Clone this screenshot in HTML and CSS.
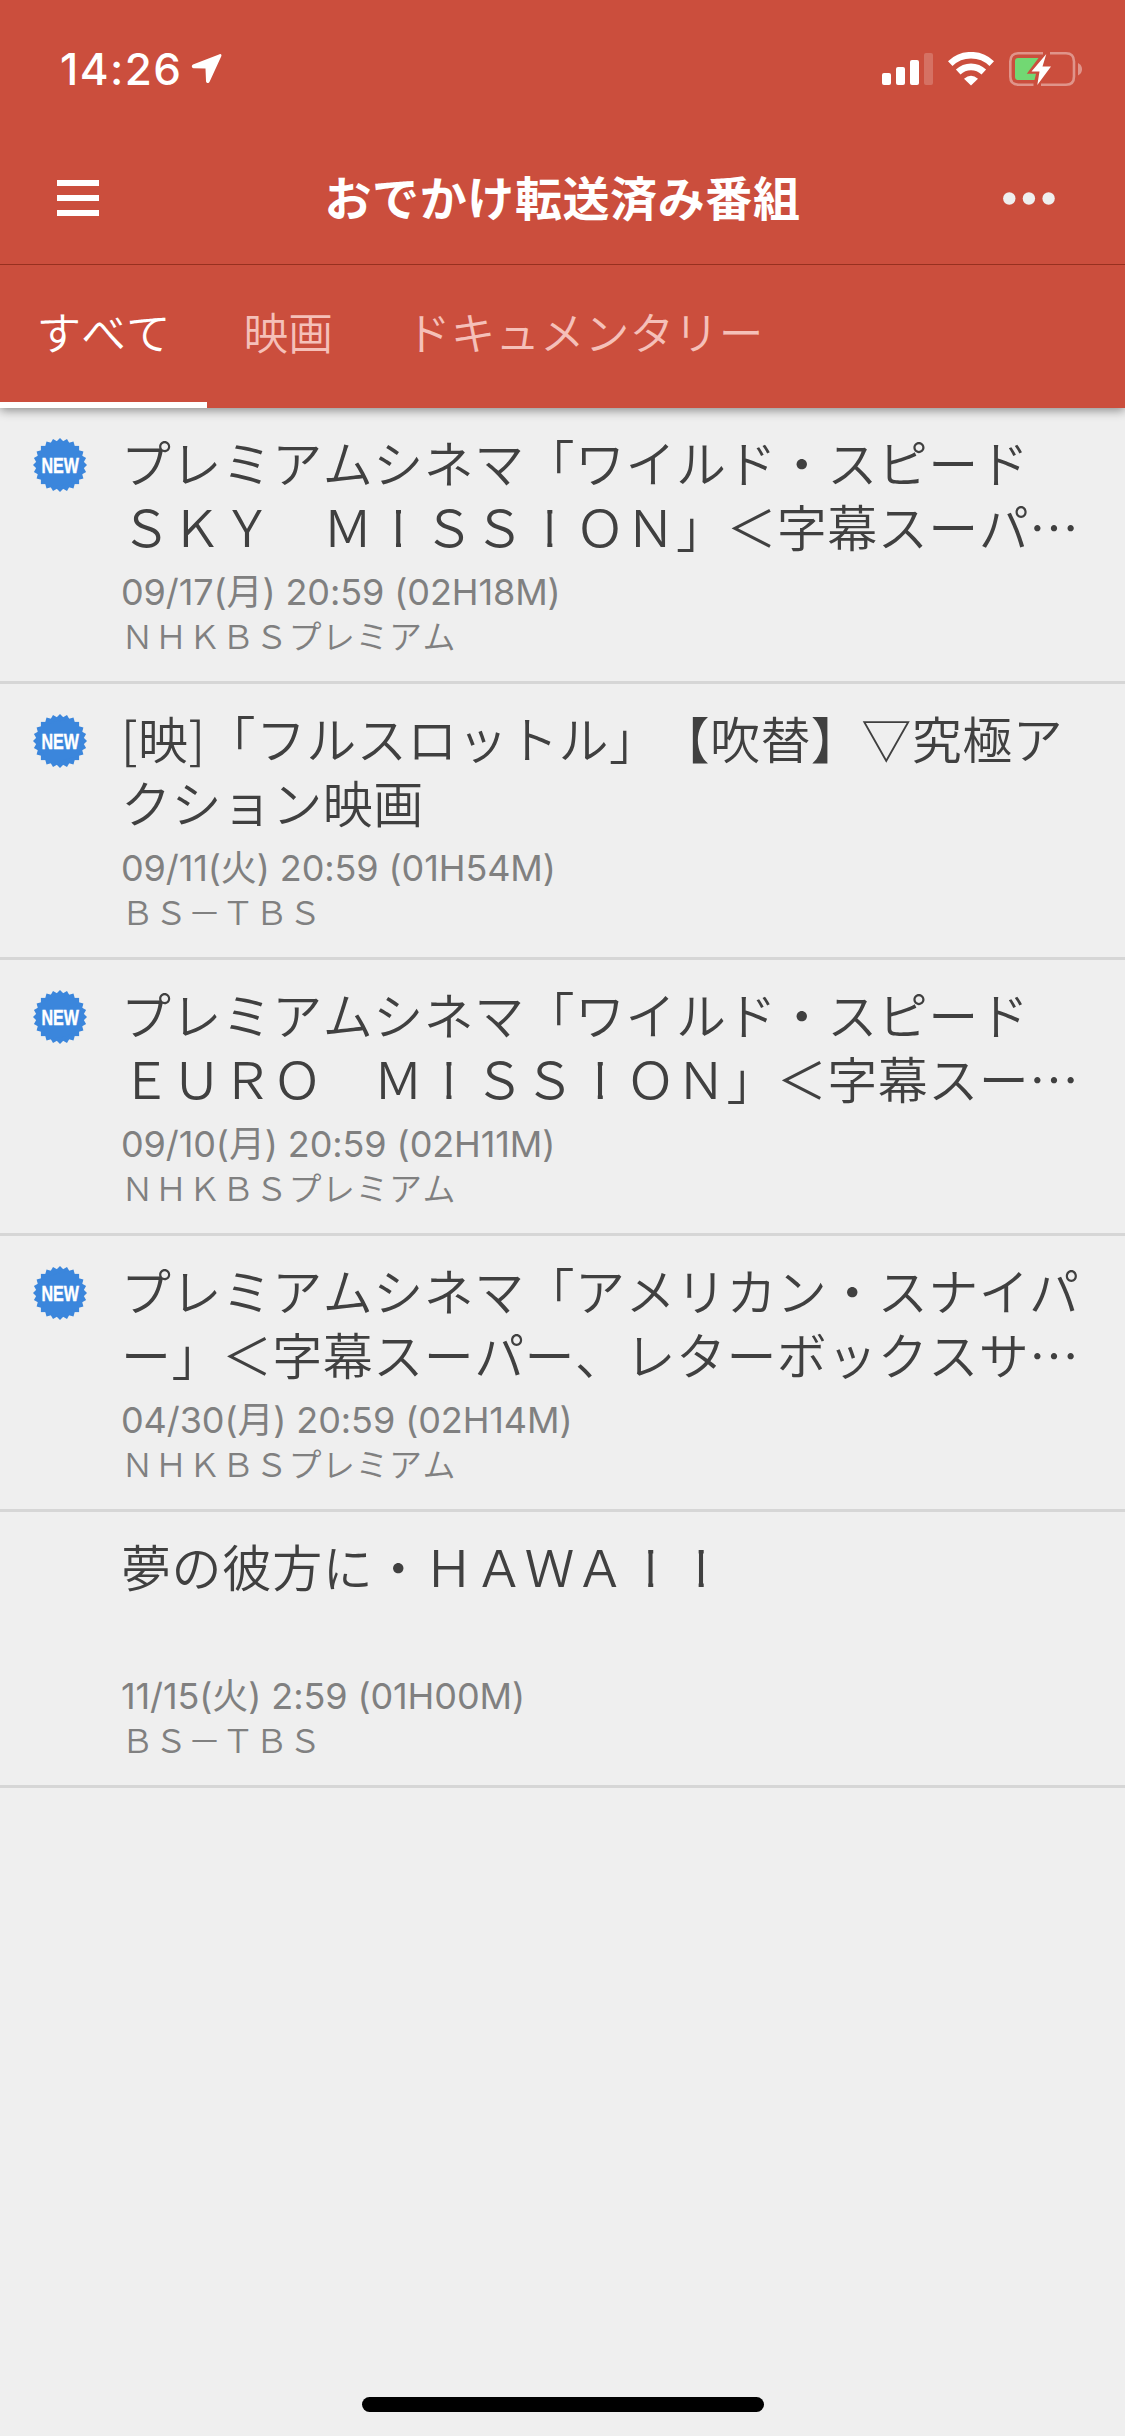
FILE: index.html
```html
<!DOCTYPE html>
<html lang="ja">
<head>
<meta charset="utf-8">
<title>おでかけ転送済み番組</title>
<link rel="stylesheet" href="styles.css">
</head>
<body>
<svg class="defs" width="0" height="0" aria-hidden="true">
  <symbol id="burst" viewBox="-27 -27 54 54">
    <g fill="#3b86dc">
      <rect x="-19.1" y="-19.1" width="38.2" height="38.2"/>
      <rect x="-19.1" y="-19.1" width="38.2" height="38.2" transform="rotate(15)"/>
      <rect x="-19.1" y="-19.1" width="38.2" height="38.2" transform="rotate(30)"/>
      <rect x="-19.1" y="-19.1" width="38.2" height="38.2" transform="rotate(45)"/>
      <rect x="-19.1" y="-19.1" width="38.2" height="38.2" transform="rotate(60)"/>
      <rect x="-19.1" y="-19.1" width="38.2" height="38.2" transform="rotate(75)"/>
    </g>
  </symbol>
</svg>
<div class="app">
  <header class="header">
    <div class="status">
      <span class="time">14:26</span>
      <svg class="location" width="31" height="32" viewBox="0 0 31 32"><path d="M28.6 1.2 2 11.6C.4 12.400.4 15 2.500 15.200L14.500 15.500 15 28C15.100 30.400 17.700 30.700 18.600 28.700L30.300 3.200C30.900 1.800 30 .6 28.600 1.200Z" fill="#fff"/></svg>
      <svg class="signal" width="51" height="32" viewBox="0 0 51 32" fill="#fff"><rect y="20" width="9" height="12" rx="2"/><rect x="14" y="14" width="9" height="18" rx="2"/><rect x="28" y="7" width="9" height="25" rx="2"/><rect x="42" width="9" height="32" rx="2" opacity=".2"/></svg>
      <svg class="wifi" width="46" height="34" viewBox="0 0 46 34"><g fill="none" stroke="#fff"><path d="M2.200 11.600A30 30 0 0 1 43.800 11.600" stroke-width="6.600"/><path d="M10.200 20A18.500 18.500 0 0 1 35.800 20" stroke-width="6.600"/></g><path d="M16 26.800Q23 20.500 30 26.800L23 33.600Z" fill="#fff"/></svg>
      <svg class="battery" width="73" height="34" viewBox="0 0 73 34"><path d="M34 1.300H9.500Q1.300 1.300 1.300 9.500V24.500Q1.300 32.700 9.500 32.700H24.500M32 32.700H57Q65 32.700 65 24.500V9.500Q65 1.300 57 1.300H41" fill="none" stroke="#fff" stroke-opacity=".4" stroke-width="2.600"/><path d="M69 11Q73 13 73 17.300T69 23.500Z" fill="#fff" opacity=".4"/><path d="M9 6H29.500L17.800 21.700H27L25.500 28H9Q6 28 6 25V9Q6 6 9 6Z" fill="#72d873"/><path d="M37.300 2 22.500 19.500H30.500L28.300 33 42 14.600H33.500Z" fill="#fff"/></svg>
    </div>
    <div class="navbar">
      <svg class="menu" width="42" height="36" viewBox="0 0 42 36" fill="#fff"><rect width="42" height="6"/><rect y="15" width="42" height="6"/><rect y="30" width="42" height="6"/></svg>
      <h1 class="heading">おでかけ転送済み番組</h1>
      <svg class="more" width="52" height="13" viewBox="0 0 52 13" fill="#efefef"><circle cx="6.300" cy="6.500" r="6.200"/><circle cx="25.900" cy="6.500" r="6.200"/><circle cx="45.600" cy="6.500" r="6.200"/></svg>
    </div>
    <nav class="tabs">
      <div class="tab active">すべて</div>
      <div class="tab">映画</div>
      <div class="tab">ドキュメンタリー</div>
    </nav>
  </header>
  <main class="list">
    <article class="item">
      <div class="mark"><svg width="54" height="54" viewBox="0 0 54 54"><use href="#burst"/><text class="badge-text" x="8.500" y="34.700" textLength="37.500" lengthAdjust="spacingAndGlyphs">NEW</text></svg></div>
      <div class="body"><h2 class="title">プレミアムシネマ「ワイルド・スピード<br>ＳＫＹ　Ｍ<i>Ｉ</i>ＳＳ<i>Ｉ</i>ＯＮ」＜字幕スーパ…</h2><p class="date">09/17(月) 20:59 (02H18M)</p><p class="station">ＮＨＫＢＳプレミアム</p></div>
    </article>
    <article class="item">
      <div class="mark"><svg width="54" height="54" viewBox="0 0 54 54"><use href="#burst"/><text class="badge-text" x="8.500" y="34.700" textLength="37.500" lengthAdjust="spacingAndGlyphs">NEW</text></svg></div>
      <div class="body"><h2 class="title">[映]「フルスロットル」【吹替】▽究極ア<br>クション映画</h2><p class="date">09/11(火) 20:59 (01H54M)</p><p class="station">ＢＳ－ＴＢＳ</p></div>
    </article>
    <article class="item">
      <div class="mark"><svg width="54" height="54" viewBox="0 0 54 54"><use href="#burst"/><text class="badge-text" x="8.500" y="34.700" textLength="37.500" lengthAdjust="spacingAndGlyphs">NEW</text></svg></div>
      <div class="body"><h2 class="title">プレミアムシネマ「ワイルド・スピード<br>ＥＵＲＯ　Ｍ<i>Ｉ</i>ＳＳ<i>Ｉ</i>ＯＮ」＜字幕スー…</h2><p class="date">09/10(月) 20:59 (02H11M)</p><p class="station">ＮＨＫＢＳプレミアム</p></div>
    </article>
    <article class="item">
      <div class="mark"><svg width="54" height="54" viewBox="0 0 54 54"><use href="#burst"/><text class="badge-text" x="8.500" y="34.700" textLength="37.500" lengthAdjust="spacingAndGlyphs">NEW</text></svg></div>
      <div class="body"><h2 class="title">プレミアムシネマ「アメリカン・スナイパ<br>ー」＜字幕スーパー、レターボックスサ…</h2><p class="date">04/30(月) 20:59 (02H14M)</p><p class="station">ＮＨＫＢＳプレミアム</p></div>
    </article>
    <article class="item">
      <div class="mark"></div>
      <div class="body"><h2 class="title">夢の彼方に・ＨＡＷＡ<i>Ｉ</i><i>Ｉ</i></h2><p class="date">11/15(火) 2:59 (01H00M)</p><p class="station">ＢＳ－ＴＢＳ</p></div>
    </article>
  </main>
  <div class="home-indicator"></div>
</div>
</body>
</html>
```
FILE: styles.css
```css
* { box-sizing: border-box; }
body { margin: 0; background: #efefef; font-family: "Noto Sans CJK JP", sans-serif; font-kerning: none; text-spacing-trim: space-all; }
h1, h2, p { margin: 0; font-weight: inherit; }
svg { display: block; flex: none; }
.defs { position: absolute; }
.app { display: flex; flex-direction: column; width: 1125px; height: 2436px; overflow: hidden; }

.header { height: 408px; background: #cb4e3d; box-shadow: 0 2px 10px rgba(0, 0, 0, .45); color: #fff; }
.status { display: flex; align-items: flex-start; height: 132px; padding: 52px 43px 0 60px; }
.time { width: 131px; font: 550 44px/34px Inter, sans-serif; letter-spacing: 1.4px; white-space: nowrap; }
.location { margin-top: 1px; }
.signal { margin: 1px 15px 0 auto; }
.wifi { margin-right: 15px; }

.navbar { display: grid; grid-template-columns: 120px 1fr 120px; align-items: center; height: 133px; border-bottom: 1px solid #97301f; }
.menu { margin-left: 57px; }
.heading { padding-bottom: 4px; font-size: 47px; font-weight: 700; line-height: 60px; letter-spacing: .6px; text-align: center; white-space: nowrap; }
.more { margin-left: -2px; }

.tabs { display: flex; height: 143px; }
.tab { padding: 34px 36.5px 0; font-size: 44.7px; font-weight: 350; line-height: 64px; white-space: nowrap; color: #f5c0b9; }
.tab.active { color: #fff; border-bottom: 6px solid #fff; }

.list { flex: 1; }
.item { display: flex; height: 276px; border-bottom: 3px solid #d6d6d6; }
.mark { flex: none; width: 121px; padding: 30px 0 0 33px; }
.badge-text { font: 700 21.5px "Liberation Sans", sans-serif; fill: #fff; stroke: #fff; stroke-width: .4px; }
.body { padding-top: 21px; white-space: nowrap; }
.title { height: 141px; font-size: 50px; font-weight: 350; line-height: 64px; letter-spacing: .45px; color: #404040; }
/* Full-width I shown as a bare stem, without its crossbars */
.title i { display: inline-block; font-style: normal; line-height: inherit; clip-path: inset(0 45%); }
.date, .station { color: #808080; }
.date { height: 45px; font-family: Inter, "Noto Sans CJK JP", sans-serif; font-size: 36px; font-weight: 375; font-kerning: normal; line-height: 45px; letter-spacing: -.1px; }
.station { font-size: 33px; font-weight: 350; line-height: 41px; letter-spacing: .5px; }

.home-indicator { width: 402px; height: 15px; margin: 0 auto 24px; border-radius: 8px; background: #000; }
```
